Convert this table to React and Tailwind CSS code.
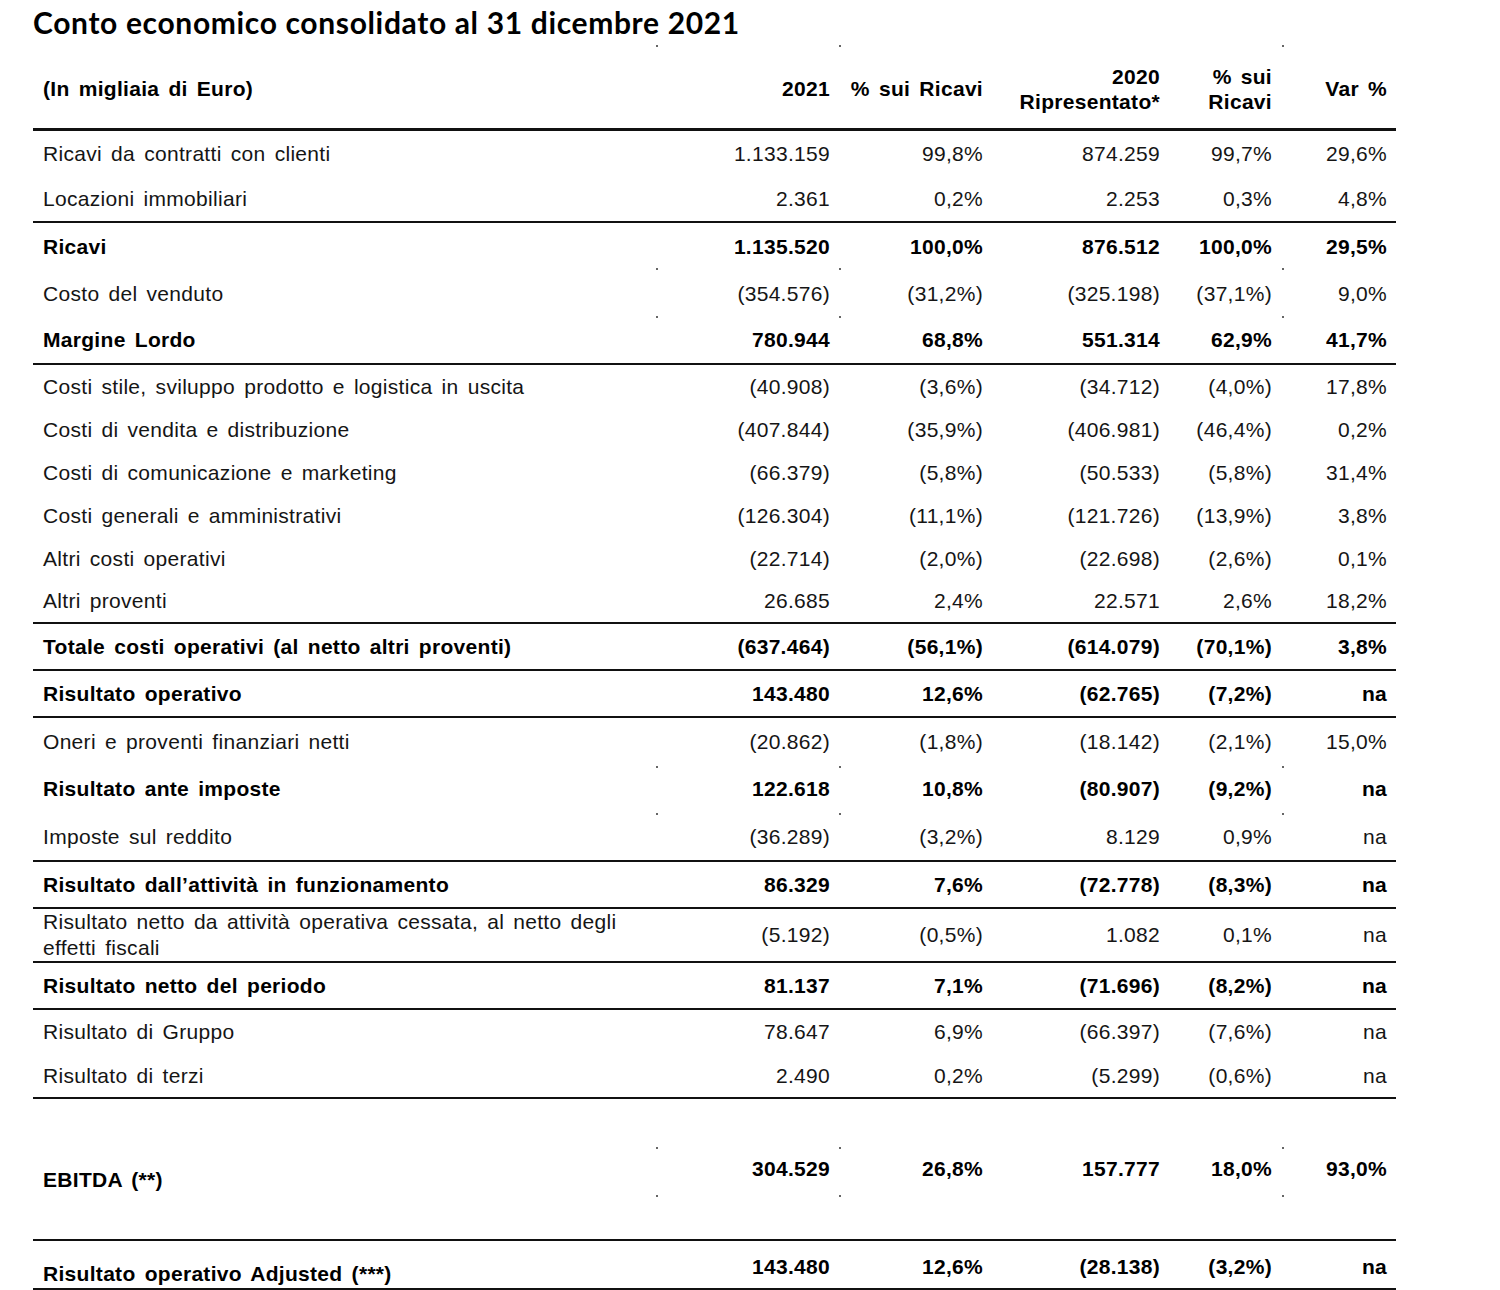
import React from "react";

const COLS = "grid grid-cols-[677px_129px_153px_177px_112px_115px]";

const sections = [
  {
    rows: [
      { h: "h-[45px]", label: "Ricavi da contratti con clienti", v: ["1.133.159", "99,8%", "874.259", "99,7%", "29,6%"] },
      { h: "h-[45px]", label: "Locazioni immobiliari", v: ["2.361", "0,2%", "2.253", "0,3%", "4,8%"] },
    ],
  },
  {
    rows: [
      { h: "h-[47px]", b: true, label: "Ricavi", v: ["1.135.520", "100,0%", "876.512", "100,0%", "29,5%"] },
      { h: "h-[47px]", label: "Costo del venduto", v: ["(354.576)", "(31,2%)", "(325.198)", "(37,1%)", "9,0%"] },
      { h: "h-[46px]", b: true, label: "Margine Lordo", v: ["780.944", "68,8%", "551.314", "62,9%", "41,7%"] },
    ],
  },
  {
    rows: [
      { h: "h-[43px]", label: "Costi stile, sviluppo prodotto e logistica in uscita", v: ["(40.908)", "(3,6%)", "(34.712)", "(4,0%)", "17,8%"] },
      { h: "h-[43px]", label: "Costi di vendita e distribuzione", v: ["(407.844)", "(35,9%)", "(406.981)", "(46,4%)", "0,2%"] },
      { h: "h-[43px]", label: "Costi di comunicazione e marketing", v: ["(66.379)", "(5,8%)", "(50.533)", "(5,8%)", "31,4%"] },
      { h: "h-[43px]", label: "Costi generali e amministrativi", v: ["(126.304)", "(11,1%)", "(121.726)", "(13,9%)", "3,8%"] },
      { h: "h-[43px]", label: "Altri costi operativi", v: ["(22.714)", "(2,0%)", "(22.698)", "(2,6%)", "0,1%"] },
      { h: "h-[42px]", label: "Altri proventi", v: ["26.685", "2,4%", "22.571", "2,6%", "18,2%"] },
    ],
  },
  {
    rows: [
      { h: "h-[45px]", b: true, label: "Totale costi operativi (al netto altri proventi)", v: ["(637.464)", "(56,1%)", "(614.079)", "(70,1%)", "3,8%"] },
    ],
  },
  {
    rows: [
      { h: "h-[45px]", b: true, label: "Risultato operativo", v: ["143.480", "12,6%", "(62.765)", "(7,2%)", "na"] },
    ],
  },
  {
    rows: [
      { h: "h-[47px]", label: "Oneri e proventi finanziari netti", v: ["(20.862)", "(1,8%)", "(18.142)", "(2,1%)", "15,0%"] },
      { h: "h-[48px]", b: true, label: "Risultato ante imposte", v: ["122.618", "10,8%", "(80.907)", "(9,2%)", "na"] },
      { h: "h-[47px]", label: "Imposte sul reddito", v: ["(36.289)", "(3,2%)", "8.129", "0,9%", "na"] },
    ],
  },
  {
    rows: [
      { h: "h-[45px]", b: true, label: "Risultato dall\u2019attività in funzionamento", v: ["86.329", "7,6%", "(72.778)", "(8,3%)", "na"] },
    ],
  },
  {
    rows: [
      {
        h: "h-[52px]",
        two: true,
        label: ["Risultato netto da attività operativa cessata, al netto degli", "effetti fiscali"],
        v: ["(5.192)", "(0,5%)", "1.082", "0,1%", "na"],
      },
    ],
  },
  {
    rows: [
      { h: "h-[45px]", b: true, label: "Risultato netto del periodo", v: ["81.137", "7,1%", "(71.696)", "(8,2%)", "na"] },
    ],
  },
  {
    rows: [
      { h: "h-[44px]", label: "Risultato di Gruppo", v: ["78.647", "6,9%", "(66.397)", "(7,6%)", "na"] },
      { h: "h-[43px]", label: "Risultato di terzi", v: ["2.490", "0,2%", "(5.299)", "(0,6%)", "na"] },
    ],
  },
  {
    rows: [
      { h: "h-[140px]", b: true, lab: "mt-[22px]", num: "mt-0", label: "EBITDA (**)", v: ["304.529", "26,8%", "157.777", "18,0%", "93,0%"] },
    ],
  },
  {
    rows: [
      { h: "h-[47px]", b: true, lab: "mt-[19px]", num: "mt-[5px]", label: "Risultato operativo Adjusted (***)", v: ["143.480", "12,6%", "(28.138)", "(3,2%)", "na"] },
    ],
  },
];

const DOT_Y = [45, 268, 316, 766, 813, 1147, 1195];
const DOT_X = [656, 839, 1282];

function Row({ r }) {
  const weight = r.b ? "font-bold text-black" : "font-normal text-[#151515]";
  return (
    <div className={`${COLS} ${r.h} items-center ${weight}`}>
      <div className={`pl-[10px] whitespace-nowrap ${r.lab || ""} ${r.two ? "leading-[26px]" : ""}`}>
        {r.two ? (
          <>
            <div>{r.label[0]}</div>
            <div>{r.label[1]}</div>
          </>
        ) : (
          r.label
        )}
      </div>
      {r.v.map((x, i) => (
        <div key={i} className={`pr-[9px] text-right whitespace-nowrap ${r.num || ""}`}>
          {x}
        </div>
      ))}
    </div>
  );
}

export default function App() {
  return (
    <div className="relative w-[1500px] h-[1290px] bg-white overflow-hidden">
      <div className="ml-[33px] w-[1363px] font-['Liberation_Sans',Arial,sans-serif] text-[21px] tracking-[0.3px] [word-spacing:3px] leading-[24px]">
        <div className="h-[44px] flex items-center">
          <h1 className="font-['Lato',sans-serif] font-bold text-[30px] tracking-[0.65px] [word-spacing:0px] text-black leading-none">
            Conto economico consolidato al 31 dicembre 2021
          </h1>
        </div>
        <div className={`${COLS} h-[87px] pt-[5px] items-center font-bold text-black border-b-[3px] border-[#111] leading-[25px]`}>
          <div className="pl-[10px]">(In migliaia di Euro)</div>
          <div className="pr-[9px] text-right">2021</div>
          <div className="pr-[9px] text-right whitespace-nowrap">% sui Ricavi</div>
          <div className="pr-[9px] text-right">
            <div>2020</div>
            <div>Ripresentato*</div>
          </div>
          <div className="pr-[9px] text-right">
            <div>% sui</div>
            <div>Ricavi</div>
          </div>
          <div className="pr-[9px] text-right">Var %</div>
        </div>
        {sections.map((s, i) => (
          <div key={i} className="border-b-2 border-[#111]">
            {s.rows.map((r, j) => (
              <Row key={j} r={r} />
            ))}
          </div>
        ))}
      </div>
      {DOT_Y.map((y) =>
        DOT_X.map((x) => (
          <span
            key={`${x}-${y}`}
            className="absolute w-[2px] h-[2px] rounded-full bg-[#333]"
            style={{ left: x, top: y }}
          />
        ))
      )}
    </div>
  );
}
